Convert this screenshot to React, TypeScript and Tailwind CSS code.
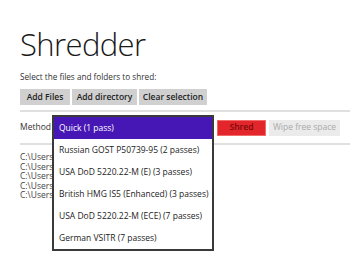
import React from 'react'

const methods = [
  'Quick (1 pass)',
  'Russian GOST P50739-95 (2 passes)',
  'USA DoD 5220.22-M (E) (3 passes)',
  'British HMG IS5 (Enhanced) (3 passes)',
  'USA DoD 5220.22-M (ECE) (7 passes)',
  'German VSITR (7 passes)',
]

const files = ['C:\\Users\\', 'C:\\Users\\', 'C:\\Users\\', 'C:\\Users\\', 'C:\\Users\\']

export default function App() {
  return (
    <div className="relative w-[350px] h-[271px] overflow-hidden bg-white font-['Open_Sans',sans-serif] text-[#222]">
      <div className="pl-[20px]">
        <h1 className="pt-[25px] text-[31px] leading-[38px] font-light tracking-[-0.6px] text-[#1a1a1a]">Shredder</h1>
        <p className="mt-[8px] text-[8.2px] leading-[12px] text-[#333]">Select the files and folders to shred:</p>

        <div className="mt-[6px] flex gap-[2px]">
          <button className="w-[50px] h-[16px] bg-[#d0d0d0] text-[8.5px] font-semibold text-[#222]">Add Files</button>
          <button className="w-[65px] h-[16px] bg-[#d0d0d0] text-[8.5px] font-semibold text-[#222]">Add directory</button>
          <button className="w-[68px] h-[16px] bg-[#d0d0d0] text-[8.5px] font-semibold text-[#222]">Clear selection</button>
        </div>

        <div className="mt-[5px] h-[2px] bg-[#e0e0e0]" />

        <div className="h-[31px] flex items-center">
          <span className="w-[32px] text-[8.5px] text-[#333]">Method</span>
          <div className="w-[162px] h-[18px] border-2 border-[#444] bg-white" />
          <button className="ml-[3px] w-[49px] h-[16px] bg-[#e3262b] border border-[#f06a6a] text-[8.5px] font-semibold text-[#7a0a0a]">Shred</button>
          <button className="ml-[3px] w-[71px] h-[16px] bg-[#ebebeb] text-[8.5px] text-[#aaaaaa]">Wipe free space</button>
        </div>

        <div className="h-[2px] bg-[#e0e0e0]" />

        <div className="pt-[7px] flex flex-col">
          {files.map((f, i) => (
            <span key={i} className="text-[8.5px] leading-[9.6px] text-[#444]">{f}</span>
          ))}
        </div>
      </div>

      {/* open dropdown list */}
      <div className="absolute left-[52px] top-[115px] w-[162px] border-2 border-[#3a3a3a] bg-white">
        {methods.map((m, i) => (
          <div
            key={m}
            className={`h-[22px] flex items-center pl-[5px] text-[8.5px] whitespace-nowrap ${i === 0 ? 'bg-[#4617b4] text-white' : 'text-[#222]'}`}
          >
            {m}
          </div>
        ))}
      </div>
    </div>
  )
}
